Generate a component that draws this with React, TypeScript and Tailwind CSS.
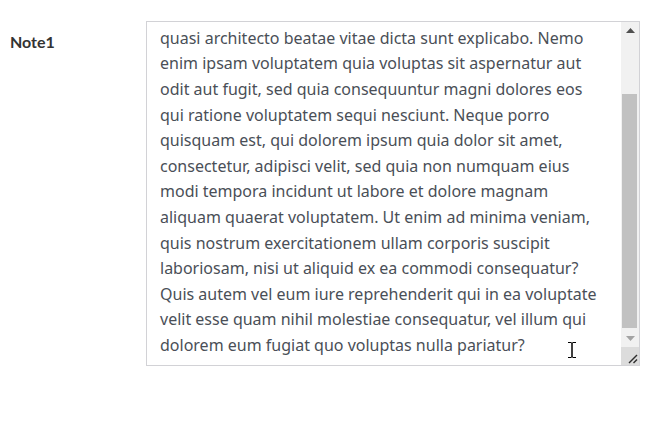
const lines = [
  "rem aperiam, eaque ipsa quae ab illo inventore veritatis et",
  "quasi architecto beatae vitae dicta sunt explicabo. Nemo",
  "enim ipsam voluptatem quia voluptas sit aspernatur aut",
  "odit aut fugit, sed quia consequuntur magni dolores eos",
  "qui ratione voluptatem sequi nesciunt. Neque porro",
  "quisquam est, qui dolorem ipsum quia dolor sit amet,",
  "consectetur, adipisci velit, sed quia non numquam eius",
  "modi tempora incidunt ut labore et dolore magnam",
  "aliquam quaerat voluptatem. Ut enim ad minima veniam,",
  "quis nostrum exercitationem ullam corporis suscipit",
  "laboriosam, nisi ut aliquid ex ea commodi consequatur?",
  "Quis autem vel eum iure reprehenderit qui in ea voluptate",
  "velit esse quam nihil molestiae consequatur, vel illum qui",
  "dolorem eum fugiat quo voluptas nulla pariatur?",
];

export default function App() {
  return (
    <div className="relative w-[648px] h-[424px] bg-white font-['Noto_Sans',sans-serif]">
      <div className="flex pt-[21px]">
        <div className="w-[146px] pl-[10px] pt-[9px]">
          <span className="font-['Lato',sans-serif] text-[16px] leading-[24px] font-bold text-[#333333]">Note1</span>
        </div>
        <div className="flex w-[494px] h-[345px] border border-[#d2d2d6] bg-white">
          <div className="flex-1 overflow-hidden pl-[13px]">
            <div className="mt-[-21.8px] text-[16px] leading-[25.6px] text-[#4a4f57] whitespace-nowrap">
              {lines.map((l, i) => (
                <div key={i}>{l}</div>
              ))}
            </div>
          </div>
          <div className="flex flex-col w-[18px] bg-[#f1f1f1]">
            <div className="h-[17px] flex items-center justify-center">
              <svg width="9" height="5" viewBox="0 0 9 5">
                <path d="M0 5 L4.5 0 L9 5 Z" fill="#505050" />
              </svg>
            </div>
            <div className="flex-1 pl-[1px] pt-[55px] pb-[2px]">
              <div className="w-[15px] h-full bg-[#c1c1c1]" />
            </div>
            <div className="h-[17px] flex items-center justify-center">
              <svg width="9" height="5" viewBox="0 0 9 5">
                <path d="M0 0 L9 0 L4.5 5 Z" fill="#a3a3a3" />
              </svg>
            </div>
            <div className="h-[18px] bg-[#dcdcdc] relative">
              <svg className="absolute right-[1px] bottom-[1px]" width="12" height="12" viewBox="0 0 12 12">
                <path d="M3 11 L11 3" stroke="#2e2e2e" strokeWidth="1.5" />
                <path d="M7.5 11 L11 7.5" stroke="#2e2e2e" strokeWidth="1.5" />
              </svg>
            </div>
          </div>
        </div>
      </div>
      <svg className="absolute left-[567px] top-[341px]" width="10" height="18" viewBox="0 0 10 18">
        <path d="M1 1.5 H4 M6 1.5 H9 M4 1.5 Q5 1.5 5 3 V15 Q5 16.5 4 16.5 H1 M6 16.5 Q5 16.5 5 15 V3 Q5 1.5 6 1.5 M6 16.5 H9" stroke="#ffffff" strokeWidth="2.6" fill="none" />
        <path d="M1 1.5 H4 M6 1.5 H9 M4 1.5 Q5 1.5 5 3 V15 Q5 16.5 4 16.5 H1 M6 16.5 Q5 16.5 5 15 V3 Q5 1.5 6 1.5 M6 16.5 H9" stroke="#000000" strokeWidth="1" fill="none" />
      </svg>
    </div>
  );
}
